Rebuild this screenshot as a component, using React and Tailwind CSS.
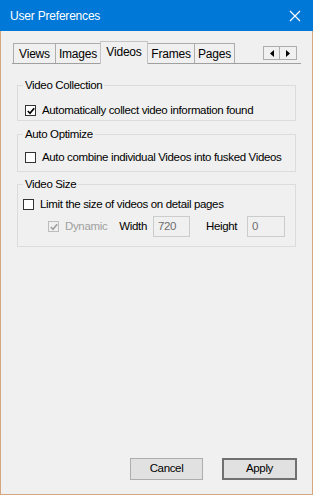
import React from 'react';

const Check = ({ checked, disabled }) => (
  <span
    className={`inline-flex w-[11px] h-[11px] shrink-0 items-center justify-center border ${
      disabled ? 'border-[#bcbcbc] bg-[#f0f0f0]' : 'border-[#333333] bg-white'
    }`}
  >
    {checked && (
      <svg width="8" height="8" viewBox="0 0 8 8">
        <path
          d="M0.8 4 L3 6.3 L7.2 1.2"
          fill="none"
          stroke={disabled ? '#a0a0a0' : '#000'}
          strokeWidth="1.7"
        />
      </svg>
    )}
  </span>
);

const Group = ({ title, children, className = '' }) => (
  <fieldset className={`min-w-0 border border-[#dcdcdc] mx-[5px] px-[6px] ${className}`}>
    <legend className="px-[2px] ml-[-1px] leading-[16px]">{title}</legend>
    {children}
  </fieldset>
);

const tabs = [
  { t: 'Views', c: 'w-[42px] border-l' },
  { t: 'Images', c: 'w-[45px] border-l' },
  { t: 'Videos', c: 'w-[48px] border-x', sel: true },
  { t: 'Frames', c: 'w-[46px]' },
  { t: 'Pages', c: 'w-[41px] border-x' },
];

export default function App() {
  return (
    <div
      className="w-[313px] h-[495px] flex flex-col bg-[#f0f0f0] border border-t-0 border-[#d4a77f] text-[11.5px] tracking-[-0.35px] text-black whitespace-nowrap"
      style={{ fontFamily: '"Liberation Sans", Arial, sans-serif' }}
    >
      {/* Title bar */}
      <div className="h-[31px] bg-[#0078d7] flex items-center justify-between pl-[10px] pr-[12px] -mx-px">
        <span className="text-white text-[12px] tracking-[-0.2px]">User Preferences</span>
        <svg width="12" height="12" viewBox="0 0 12 12">
          <path d="M1 1 L11 11 M11 1 L1 11" stroke="#fff" strokeWidth="1.2" />
        </svg>
      </div>

      {/* Body */}
      <div className="flex-1 flex flex-col px-[11px] pt-[9px] pb-[14px]">
        {/* Tabs */}
        <div className="flex items-end border-b border-[#a0a0a0] h-[24px]">
          <div className="flex items-end pl-px">
            {tabs.map(({ t, c, sel }) => (
              <div
                key={t}
                className={`flex items-center justify-center border-t text-[12px] tracking-[-0.2px] bg-[#f0f0f0] ${c} ${
                  sel
                    ? 'h-[23px] z-10 border-[#c4c4c4] pb-[3px] relative top-px'
                    : 'h-[20px] border-[#adadad]'
                }`}
              >
                {t}
              </div>
            ))}
          </div>
          <div className="flex-1" />
          <div className="flex mb-[3px] mr-[4px]">
            <div className="w-[17px] h-[14px] border border-[#adadad] bg-[#f0f0f0] flex items-center justify-center">
              <svg width="4" height="7" viewBox="0 0 4 7">
                <path d="M4 0 L0 3.5 L4 7 Z" fill="#000" />
              </svg>
            </div>
            <div className="w-[17px] h-[14px] border border-l-0 border-[#adadad] bg-[#f0f0f0] flex items-center justify-center">
              <svg width="4" height="7" viewBox="0 0 4 7">
                <path d="M0 0 L4 3.5 L0 7 Z" fill="#000" />
              </svg>
            </div>
          </div>
        </div>

        {/* Panel */}
        <div className="flex flex-col pt-[13px] gap-[4px]">
          <Group title="Video Collection" className="pt-[9px] pb-[1px]">
            <label className="flex items-center h-[17px] gap-[6px] pl-[1px]">
              <Check checked />
              <span>Automatically collect video information found</span>
            </label>
          </Group>

          <Group title="Auto Optimize" className="pt-[7px] pb-[5px] mt-[1px]">
            <label className="flex items-center h-[17px] gap-[6px] pl-[1px]">
              <Check />
              <span>Auto combine individual Videos into fusked Videos</span>
            </label>
          </Group>

          <Group title="Video Size" className="pt-[4px] pb-[9px]">
            <label className="flex items-center h-[17px] gap-[6px] -ml-px">
              <Check />
              <span>Limit the size of videos on detail pages</span>
            </label>
            <div className="flex items-center mt-[3px] pl-[24px]">
              <Check checked disabled />
              <span className="ml-[6px] text-[#a0a0a0]">Dynamic</span>
              <span className="ml-[12px]">Width</span>
              <div className="ml-[6px] w-[37px] h-[21px] border border-[#cccccc] bg-[#f0f0f0] text-[#6d6d6d] flex items-center pl-[4px]">
                720
              </div>
              <span className="ml-[16px]">Height</span>
              <div className="ml-[10px] w-[38px] h-[21px] border border-[#cccccc] bg-[#f0f0f0] text-[#6d6d6d] flex items-center pl-[4px]">
                0
              </div>
            </div>
          </Group>
        </div>

        <div className="flex-1" />

        {/* Buttons */}
        <div className="flex justify-end gap-[19px] pr-[4px]">
          <button className="w-[73px] h-[22px] bg-[#e1e1e1] border border-[#adadad]">Cancel</button>
          <button className="w-[75px] h-[22px] bg-[#e1e1e1] border-2 border-[#707070]">Apply</button>
        </div>
      </div>
    </div>
  );
}
